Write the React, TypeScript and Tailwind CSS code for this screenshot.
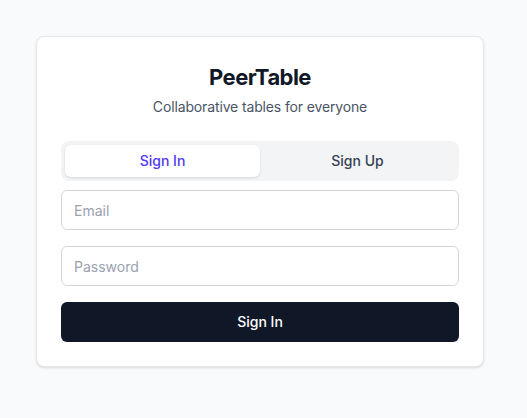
import React, { useState } from "react";

export default function App() {
  const [tab, setTab] = useState<"in" | "up">("in");
  return (
    <div
      className="min-h-screen bg-gray-50 pl-9 pt-9"
      style={{ fontFamily: "Inter, 'Noto Sans', sans-serif" }}
    >
      <div className="w-[448px] rounded-lg border border-gray-200 bg-white p-6 shadow-sm">
        <div className="text-center">
          <h1 className="text-[22px] leading-8 font-bold tracking-tight text-gray-900">PeerTable</h1>
          <p className="mt-1 text-sm tracking-[-0.01em] text-gray-600">Collaborative tables for everyone</p>
        </div>
        <div className="mt-6 mb-[9px] flex rounded-lg bg-gray-100 p-1">
          <button
            onClick={() => setTab("in")}
            className={`flex-1 rounded-md py-1.5 text-sm font-medium ${tab === "in" ? "bg-white text-indigo-600 shadow-sm" : "text-gray-700"}`}
          >
            Sign In
          </button>
          <button
            onClick={() => setTab("up")}
            className={`flex-1 rounded-md py-1.5 text-sm font-medium ${tab === "up" ? "bg-white text-indigo-600 shadow-sm" : "text-gray-700"}`}
          >
            Sign Up
          </button>
        </div>
        <form className="space-y-4" onSubmit={(e) => e.preventDefault()}>
          <input
            type="email"
            placeholder="Email"
            className="block h-10 w-full rounded-md border border-gray-300 px-3 text-sm text-gray-900 placeholder-gray-400 outline-none"
          />
          <input
            type="password"
            placeholder="Password"
            className="block h-10 w-full rounded-md border border-gray-300 px-3 text-sm text-gray-900 placeholder-gray-400 outline-none"
          />
          <button
            type="submit"
            className="block h-10 w-full rounded-md bg-gray-900 text-sm font-medium text-white"
          >
            Sign In
          </button>
        </form>
      </div>
    </div>
  );
}
